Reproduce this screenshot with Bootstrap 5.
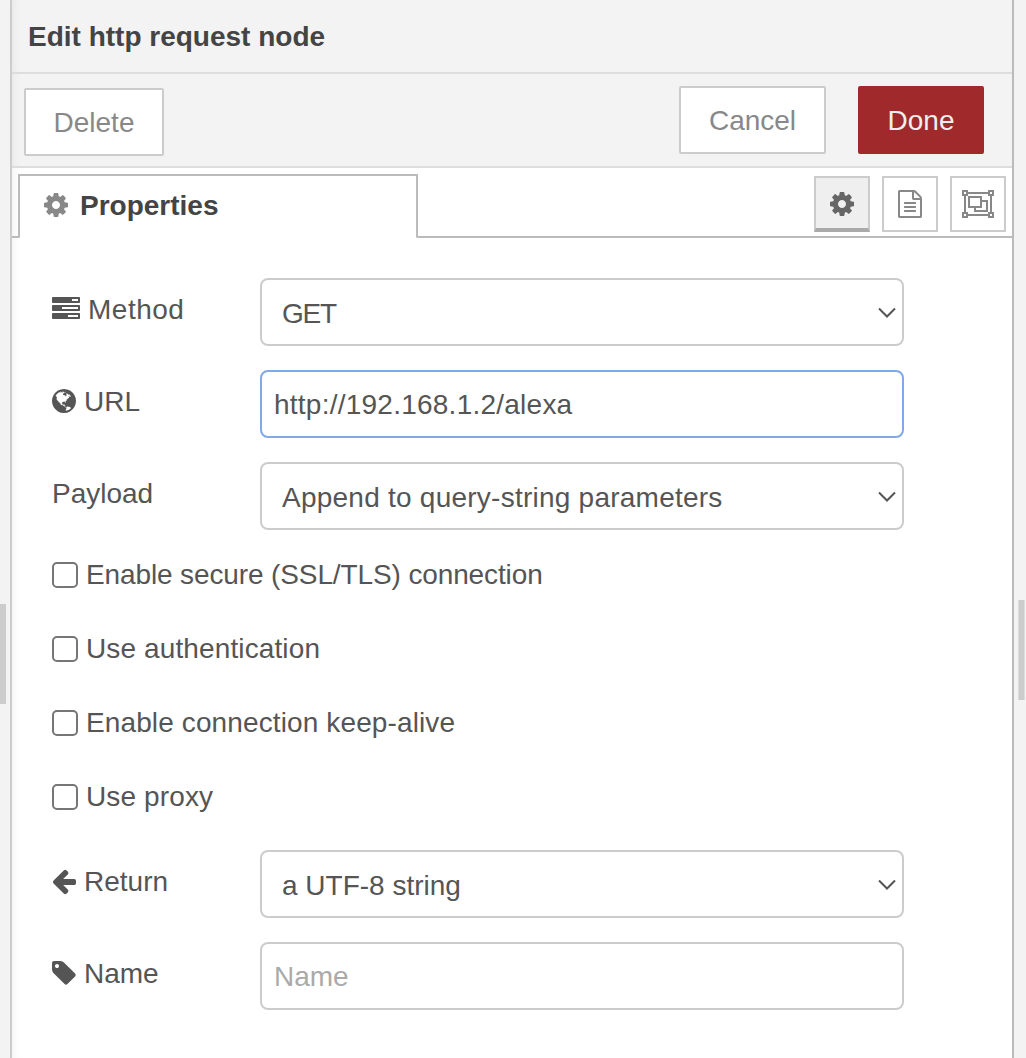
<!DOCTYPE html>
<html lang="en">
<head>
<meta charset="utf-8">
<title>Edit http request node</title>
<link rel="stylesheet" href="https://cdn.jsdelivr.net/npm/bootstrap@5.3.0/dist/css/bootstrap.min.css">
<style>
html, body { height: 1058px; overflow: hidden; }
body { font-family: "Liberation Sans", Arial, sans-serif; font-size: 28px; line-height: 40px; color: #555; background: #f3f3f3; }
svg { display: block; flex: none; fill: currentColor; }
.gutter-left { width: 10px; }
.gutter-right { width: 12px; }
.grip-left { width: 6px; height: 100px; margin-top: 604px; background: #ccc; }
.grip-right { width: 7px; height: 100px; margin: 600px 0 0 4px; background: #ccc; border: solid #ddd; border-width: 0 1px; }
.tray { border-left: 2px solid #ccc; border-right: 2px solid #bbb; background: #fff; }
.tray, .tray-head, .tray-tools { box-shadow: inset 8px 0 8px -6px rgba(0,0,0,.05); }
.tray-head { height: 74px; padding: 17px 16px 0; background: #f3f3f3; border-bottom: 2px solid #ddd; color: #444; font-weight: 700; }
.tray-tools { height: 94px; padding: 12px 28px 0 12px; background: #f3f3f3; border-bottom: 2px solid #ddd; }
.tray-btn { height: 68px; padding: 0; border: 2px solid #ccc; border-radius: 2px; background: #fff; color: #888; font-size: 28px; line-height: 66px; }
.btn-del { width: 140px; margin-top: 2px; }
.btn-cancel { width: 147px; margin-right: 32px; }
.btn-done { width: 126px; background: #9f292b; border-color: #9f292b; color: #eee; }
.tabs { height: 70px; padding-top: 6px; }
.tab-edge { width: 8px; margin-right: -2px; border: solid #bbb; border-width: 0 2px 2px 0; border-bottom-right-radius: 2px; }
.tab-main { width: 400px; border-top: 2px solid #bbb; padding: 10px 0 0 26px; color: #444; font-weight: 700; }
.tab-main svg { color: #888; margin: 7px 12px 0 0; }
.tab-rest { margin-left: -2px; border: solid #bbb; border-width: 0 0 2px 2px; border-bottom-left-radius: 2px; padding: 2px 6px 0 0; gap: 12px; }
.tool { width: 56px; height: 56px; border: 2px solid #ccc; color: #888; }
.tool-on { background: #efefef; border-bottom: 4px solid #aaa; color: #666; padding-top: 2px; }
.outline-icon { fill: none; stroke: currentColor; stroke-width: 2; }
.fields { padding: 40px 108px 0 40px; }
.field { height: 68px; margin-bottom: 24px; }
.field-name { flex: none; width: 208px; height: 60px; padding-top: 2px; }
.field-name span { padding-top: 1px; }
.field .form-control, .field .form-select { height: 68px; border: 2px solid #ccc; border-radius: 8px; font-size: 28px; line-height: 40px; color: #555; padding: 2px 12px 0; background-color: #fff; box-shadow: none; }
.field .form-select { padding: 4px 40px 0 20px; background-image: url("data:image/svg+xml,%3Csvg xmlns='http://www.w3.org/2000/svg' viewBox='0 0 18 12'%3E%3Cpath d='M1 1.5l8 8 8-8' fill='none' stroke='%23555' stroke-width='2'/%3E%3C/svg%3E"); background-size: 18px 12px; background-position: right 6px top 27px; }
.field .is-active { border-color: #7fa9e8; }
.field .form-control::placeholder { color: #aaa; opacity: 1; }
.checks { margin: 25px 0 33px; gap: 34px; }
.checks .form-check-input { float: none; flex: none; width: 26px; height: 26px; margin: 0 8px 0 0; border: 2px solid #767676; border-radius: 5px; background: #fff; }
.ls-tight { letter-spacing: -.12px; }
.ls-caps { letter-spacing: -1.2px; }
.ls-open { letter-spacing: .12px; }
.ls-wide { letter-spacing: .24px; }
.ls-wider { letter-spacing: .5px; }
</style>
<script src="https://cdn.jsdelivr.net/npm/bootstrap@5.3.0/dist/js/bootstrap.bundle.min.js"></script>
</head>
<body>
<svg width="0" height="0" class="position-absolute">
<symbol id="cog" viewBox="0 0 1536 1536"><path transform="translate(-128 -128)" d="M1152 896q0-106-75-181t-181-75-181 75-75 181 75 181 181 75 181-75 75-181zm512-109v222q0 12-8 23t-20 13l-185 28q-19 54-39 91 35 50 107 138 10 12 10 25t-9 23q-27 37-99 108t-94 71q-12 0-26-9l-138-108q-44 23-91 38-16 136-29 186-7 28-36 28h-222q-14 0-24.500-8.500t-11.500-21.500l-28-184q-49-16-90-37l-141 107q-10 9-25 9-14 0-25-11-126-114-165-168-7-10-7-23 0-12 8-23 15-21 51-66.500t54-70.500q-27-50-41-99l-183-27q-13-2-21-12.500t-8-23.500v-222q0-12 8-23t19-13l186-28q14-46 39-92-40-57-107-138-10-12-10-24 0-10 9-23 26-36 98.500-107.500t94.500-71.500q13 0 26 10l138 107q44-23 91-38 16-136 29-186 7-28 36-28h222q14 0 24.500 8.500t11.500 21.500l28 184q49 16 90 37l142-107q9-9 24-9 13 0 25 10 129 119 165 170 7 8 7 22 0 12-8 23-15 21-51 66.500t-54 70.500q26 50 41 98l183 28q13 2 21 12.500t8 23.500z"/></symbol>
</svg>
<div class="d-flex h-100">
  <div class="gutter-left"><div class="grip-left"></div></div>
  <main class="tray flex-grow-1">
    <header class="tray-head">Edit http request node</header>
    <div class="tray-tools d-flex align-items-start">
      <button class="btn tray-btn btn-del me-auto">Delete</button>
      <button class="btn tray-btn btn-cancel">Cancel</button>
      <button class="btn tray-btn btn-done">Done</button>
    </div>
    <nav class="tabs d-flex">
      <div class="tab-edge"></div>
      <div class="tab-main d-flex align-items-start"><svg width="24" height="24"><use href="#cog"/></svg>Properties</div>
      <div class="tab-rest d-flex flex-grow-1 justify-content-end">
        <div class="tool tool-on d-flex justify-content-center align-items-center"><svg width="24" height="24"><use href="#cog"/></svg></div>
        <div class="tool d-flex justify-content-center align-items-center"><svg width="24" height="28" viewBox="128 0 1536 1792"><path d="M1596 380q28 28 48 76t20 88v1152q0 40-28 68t-68 28h-1344q-40 0-68-28t-28-68v-1600q0-40 28-68t68-28h896q40 0 88 20t76 48zm-444-244v376h376q-10-29-22-41l-313-313q-12-12-41-22zm384 1528v-1024h-416q-40 0-68-28t-28-68v-416h-768v1536h1280zm-1024-864q0-14 9-23t23-9h704q14 0 23 9t9 23v64q0 14-9 23t-23 9h-704q-14 0-23-9t-9-23v-64zm736 224q14 0 23 9t9 23v64q0 14-9 23t-23 9h-704q-14 0-23-9t-9-23v-64q0-14 9-23t23-9h704zm0 256q14 0 23 9t9 23v64q0 14-9 23t-23 9h-704q-14 0-23-9t-9-23v-64q0-14 9-23t23-9h704z"/></svg></div>
        <div class="tool d-flex justify-content-center align-items-center"><svg class="outline-icon" width="32" height="28"><path d="M6 3h20M6 25h20M3 6v16M29 6v16M1 1h4v4H1zM27 1h4v4h-4zM1 23h4v4H1zM27 23h4v4h-4zM7 7h12v10H7zM20 11h5v10H13v-3"/></svg></div>
      </div>
    </nav>
    <form class="fields">
      <div class="field d-flex"><label class="field-name d-flex align-items-center"><svg class="me-2" width="28" height="28" viewBox="0 0 1792 1792"><path d="M1024 1408h640v-128h-640v128zm-384-512h1024v-128h-1024v128zm640-512h384v-128h-384v128zm512 832v256q0 26-19 45t-45 19h-1664q-26 0-45-19t-19-45v-256q0-26 19-45t45-19h1664q26 0 45 19t19 45zm0-512v256q0 26-19 45t-45 19h-1664q-26 0-45-19t-19-45v-256q0-26 19-45t45-19h1664q26 0 45 19t19 45zm0-512v256q0 26-19 45t-45 19h-1664q-26 0-45-19t-19-45v-256q0-26 19-45t45-19h1664q26 0 45 19t19 45z"/></svg><span class="ls-wider">Method</span></label><select class="form-select ls-caps"><option>GET</option></select></div>
      <div class="field d-flex"><label class="field-name d-flex align-items-center"><svg class="me-2" width="24" height="24" viewBox="128 128 1536 1536"><path d="M896 128q209 0 385.500 103t279.500 279.500 103 385.500-103 385.500-279.500 279.500-385.500 103-385.500-103-279.500-279.500-103-385.500 103-385.500 279.500-279.500 385.500-103zm274 521q-2 1-9.500 9.500t-13.500 9.500q2 0 4.500-5t5-11 3.500-7q6-7 22-15 14-6 52-12 34-8 51 11-2-2 9.500-13t14.500-12q3-2 15-4.500t15-7.500l2-22q-12 1-17.500-7t-6.500-21q0 2-6 8 0-7-4.500-8t-11.500 1-9 1q-10-3-15-7.500t-8-16.500-4-15q-2-5-9.500-11t-9.500-10q-1-2-2.500-5.500t-3-6.500-4-5.500-5.500-2.500-7 5-7.500 10-4.500 5q-3-2-6-1.500t-4.500 1-4.500 3-5 3.500q-3 2-8.500 3t-8.500 2q15-5-1-11-10-4-16-3 9-4 7.500-12t-8.500-14h5q-1-4-8.500-8.500t-17.500-8.500-13-6q-8-5-34-9.500t-33-.5q-5 6-4.500 10.500t4 14 3.500 12.500q1 6-5.500 13t-6.500 12q0 7 14 15.500t10 21.500q-3 8-16 16t-16 12q-5 8-1.500 18.500t10.500 16.500q2 2 1.500 4t-3.500 4.500-5.500 4-6.500 3.500l-3 2q-11 5-20.500-6t-13.500-26q-7-25-16-30-23-8-29 1-5-13-41-26-25-9-58-4 6-1 0-15-7-15-19-12 3-6 4-17.500t1-13.500q3-13 12-23 1-1 7-8.500t9.500-13.500.5-6q35 4 50-11 5-5 11.500-17t10.500-17q9-6 14-5.500t14.500 5.500 14.500 5q14 1 15.500-11t-7.500-20q12 1 3-17-4-7-8-9-12-4-27 5-8 4 2 8-1-1-9.500 10.500t-16.500 17.500-16-5q-1-1-5.500-13.500t-9.500-13.500q-8 0-16 15 3-8-11-15t-24-8q19-12-8-27-7-4-20.500-5t-19.500 4q-5 7-5.500 11.500t5 8 10.500 5.500 11.500 4 8.500 3q14 10 8 14-2 1-8.500 3.500t-11.500 4.500-6 4q-3 4 0 14t-2 14q-5-5-9-17.500t-7-16.500q7 9-25 6l-10-1q-4 0-16 2t-20.500 1-13.500-8q-4-8 0-20 1-4 4-2-4-3-11-9.500t-10-8.500q-46 15-94 41 6 1 12-1 5-2 13-6.500t10-5.500q34-14 42-7l5-5q14 16 20 25-7-4-30-1-20 6-22 12 7 12 5 18-4-3-11.500-10t-14.500-11-15-5q-16 0-22 1-146 80-235 222 7 7 12 8 4 1 5 9t2.500 11 11.500-3q9 8 3 19 1-1 44 27 19 17 21 21 3 11-10 18-1-2-9-9t-9-4q-3 5 .5 18.500t10.500 12.500q-7 0-9.500 16t-2.500 35.500-1 23.500l2 1q-3 12 5.500 34.500t21.500 19.500q-13 3 20 43 6 8 8 9 3 2 12 7.500t15 10 10 10.500q4 5 10 22.500t14 23.500q-2 6 9.500 20t10.500 23q-1 0-2.500 1t-2.500 1q3 7 15.500 14t15.500 13q1 3 2 10t3 11 8 2q2-20-24-62-15-25-17-29-3-5-5.500-15.500t-4.500-14.500q2 0 6 1.500t8.500 3.500 7.500 4 2 3q-3 7 2 17.500t12 18.500 17 19 12 13q6 6 14 19.500t0 13.500q9 0 20 10.500t17 19.500q5 8 8 26t5 24q2 7 8.500 13.500t12.500 9.500l16 8 13 7q5 2 18.500 10.500t21.500 11.500q10 4 16 4t14.500-2.500 13.500-3.500q15-2 29 15t21 21q36 19 55 11-2 1 .5 7.500t8 15.500 9 14.500 5.500 8.500q5 6 18 15t18 15q6-4 7-9-3 8 7 20t18 10q14-3 14-32-31 15-49-18 0-1-2.500-5.500t-4-8.500-2.500-8.500 0-7.500 5-3q9 0 10-3.500t-2-12.500-4-13q-1-8-11-20t-12-15q-5 9-16 8t-16-9q0 1-1.500 5.500t-1.500 6.500q-13 0-15-1 1-3 2.500-17.500t3.500-22.500q1-4 5.500-12t7.500-14.500 4-12.500-4.500-9.500-17.500-2.500q-19 1-26 20-1 3-3 10.500t-5 11.500-9 7q-7 3-24 2t-24-5q-13-8-22.500-29t-9.500-37q0-10 2.500-26.500t3-25-5.500-24.500q3-2 9-9.500t10-10.500q2-1 4.500-1.500t4.500 0 4-1.500 3-6q-1-1-4-3-3-3-4-3 7 3 28.500-1.500t27.500 1.500q15 11 22-2 0-1-2.500-9.500t-.5-13.500q5 27 29 9 3 3 15.500 5t17.500 5q3 2 7 5.500t5.500 4.500 5-.5 8.500-6.500q10 14 12 24 11 40 19 44 7 3 11 2t4.500-9.500 0-14-1.500-12.500l-1-8v-18l-1-8q-15-3-18.500-12t1.500-18.500 15-18.500q1-1 8-3.500t15.500-6.500 12.500-8q21-19 15-35 7 0 11-9-1 0-5-3t-7.500-5-4.500-2q9-5 2-16 5-3 7.500-11t7.500-10q9 12 21 2 7-8 1-16 5-7 20.500-10.500t18.500-9.500q7 2 8-2t1-12 3-12q4-5 15-9t13-5l17-11q3-4 0-4 18 2 31-11 10-11-6-20 3-6-3-9.500t-15-5.500q3-1 11.500-.5t10.500-1.500q15-10-7-16-17-5-43 12zm-163 877q206-36 351-189-3-3-12.500-4.500t-12.500-3.500q-18-7-24-8 1-7-2.500-13t-8-9-12.500-8-11-7q-2-2-7-6t-7-5.500-7.500-4.500-8.500-2-10 1l-3 1q-3 1-5.500 2.500t-5.500 3-4 3 0 2.500q-21-17-36-22-5-1-11-5.500t-10.500-7-10-1.500-11.500 7q-5 5-6 15t-2 13q-7-5 0-17.500t2-18.500q-3-6-10.500-4.500t-12 4.500-11.500 8.500-9 6.500-8.500 5.500-8.500 7.500q-3 4-6 12t-5 11q-2-4-11.500-6.500t-9.500-5.500q2 10 4 35t5 38q7 31-12 48-27 25-29 40-4 22 12 26 0 7-8 20.500t-7 21.500q0 6 2 16z"/></svg><span>URL</span></label><input class="form-control is-active ls-wide" value="http://192.168.1.2/alexa"></div>
      <div class="field d-flex"><label class="field-name d-flex align-items-center"><span>Payload</span></label><select class="form-select ls-wide"><option>Append to query-string parameters</option></select></div>
      <div class="checks d-flex flex-column">
        <label class="d-flex align-items-center ls-tight"><input type="checkbox" class="form-check-input">Enable secure (SSL/TLS) connection</label>
        <label class="d-flex align-items-center ls-open"><input type="checkbox" class="form-check-input">Use authentication</label>
        <label class="d-flex align-items-center ls-open"><input type="checkbox" class="form-check-input">Enable connection keep-alive</label>
        <label class="d-flex align-items-center ls-open"><input type="checkbox" class="form-check-input">Use proxy</label>
      </div>
      <div class="field d-flex"><label class="field-name d-flex align-items-center"><svg class="me-2" width="24" height="28" viewBox="128 0 1536 1792"><path d="M1664 896v128q0 53-32.500 90.500t-84.500 37.500h-704l293 294q38 36 38 90t-38 90l-75 76q-37 37-90 37-52 0-91-37l-651-652q-37-37-37-90 0-52 37-91l651-650q38-38 91-38 52 0 90 38l75 74q38 38 38 91t-38 91l-293 293h704q52 0 84.500 37.500t32.500 90.500z"/></svg><span>Return</span></label><select class="form-select"><option>a UTF-8 string</option></select></div>
      <div class="field d-flex"><label class="field-name d-flex align-items-center"><svg class="me-2" width="24" height="28" viewBox="128 0 1536 1792"><path d="M576 448q0-53-37.500-90.500t-90.500-37.500-90.500 37.500-37.500 90.500 37.500 90.500 90.500 37.500 90.500-37.500 37.500-90.500zm1067 576q0 53-37 90l-491 492q-39 37-91 37-53 0-90-37l-715-716q-38-37-64.500-101t-26.500-117v-416q0-52 38-90t90-38h416q53 0 117 26.500t102 64.500l715 714q37 39 37 91z"/></svg><span>Name</span></label><input class="form-control" placeholder="Name"></div>
    </form>
  </main>
  <div class="gutter-right"><div class="grip-right"></div></div>
</div>
</body>
</html>
